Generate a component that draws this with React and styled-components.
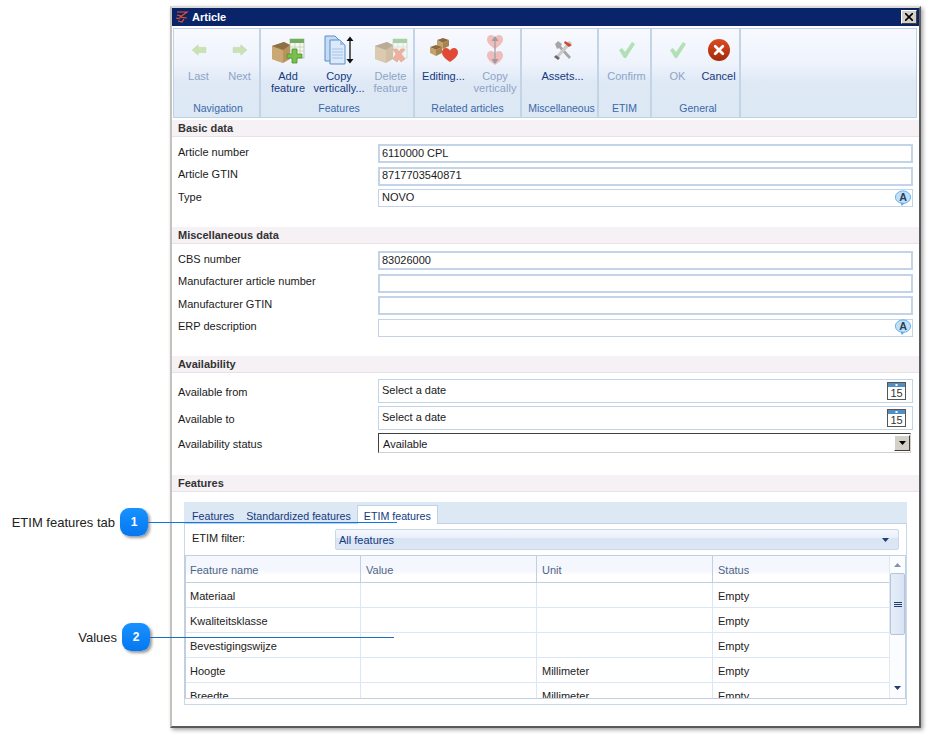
import React from "react";
import styled, { createGlobalStyle } from "styled-components";

const Global = createGlobalStyle`
  html, body { margin: 0; padding: 0; background: #fff; }
  body { font-family: "Liberation Sans", Arial, sans-serif; font-size: 11px; color: #1a1a1a; }
`;

const Page = styled.div`
  position: relative;
  width: 931px;
  height: 738px;
  overflow: hidden;
  padding: 6px 0 0 170px;
  box-sizing: border-box;
  background: #fff;
`;

const Win = styled.div`
  width: 751px;
  height: 722px;
  box-sizing: border-box;
  background: #fff;
  border-style: solid;
  border-width: 2px 2px 2px 2px;
  border-color: #dcdad4 #5a5a5a #5a5a5a #c4c2bc;
  box-shadow: 2px 2px 4px rgba(0, 0, 0, 0.35);
`;

const TitleBar = styled.div`
  height: 18px;
  background: #0a246a;
  display: flex;
  align-items: center;
  padding: 0 2px 0 3px;
  gap: 3px;
  color: #fff;
  font-weight: bold;
  font-size: 11px;
`;

const TitleText = styled.span`
  flex: 1;
`;

const CloseBtn = styled.div`
  width: 16px;
  height: 14px;
  box-sizing: border-box;
  background: #d4d0c8;
  border: 1px solid;
  border-color: #fff #404040 #404040 #fff;
  display: flex;
  align-items: center;
  justify-content: center;
`;

const Ribbon = styled.div`
  margin: 2px 2px 2px 1px;
  height: 90px;
  box-sizing: border-box;
  border: 1px solid #bfd2e6;
  display: flex;
  background: linear-gradient(#f7f9fe 0%, #eef3fc 40%, #dfe9f6 60%, #dde8f5 100%);
`;

const Group = styled.div`
  width: ${(p) => p.$w}px;
  flex: none;
  box-sizing: border-box;
  border-right: 2px solid #c3d4e6;
  display: flex;
  flex-direction: column;
`;

const GroupButtons = styled.div`
  flex: 1;
  display: flex;
  padding-left: ${(p) => p.$pad || 0}px;
`;

const ToolBtn = styled.div`
  width: ${(p) => p.$w}px;
  flex: none;
  display: flex;
  flex-direction: column;
  align-items: center;
  padding-top: 3px;
  color: ${(p) => (p.$off ? "#8ea4c6" : "#15397f")};
  font-size: 11px;
  line-height: 12px;
  text-align: center;
  white-space: nowrap;
`;

const IconWrap = styled.div`
  height: 36px;
  margin-bottom: 2px;
  display: flex;
  align-items: center;
  justify-content: center;
  opacity: ${(p) => (p.$off ? 0.55 : 1)};
`;

const GroupLabel = styled.div`
  height: 19px;
  padding-left: ${(p) => p.$indent || 0}px;
  text-align: center;
  color: #3b68a8;
  font-size: 10.5px;
  line-height: 20px;
  white-space: nowrap;
`;

const Section = styled.div`
  padding-bottom: ${(p) => p.$after}px;
`;

const SectionHead = styled.div`
  height: 17px;
  box-sizing: border-box;
  background: #f6f1f5;
  border-bottom: 1px solid #e8e2e6;
  padding-left: 6px;
  font-weight: bold;
  font-size: 11px;
  line-height: 16px;
  color: #333;
`;

const Rows = styled.div`
  display: flex;
  flex-direction: column;
  gap: ${(p) => p.$gap}px;
  padding: ${(p) => p.$top}px 6px 0 6px;
`;

const Row = styled.div`
  display: grid;
  grid-template-columns: 200px 535px;
  align-items: start;
  height: ${(p) => p.$h}px;
`;

const RowLabel = styled.div`
  position: relative;
  top: ${(p) => p.$shift || 0}px;
`;

const Field = styled.div`
  height: ${(p) => p.$h}px;
  box-sizing: border-box;
  border: ${(p) => (p.$thick ? 2 : 1)}px solid #c4d4e8;
  padding-left: ${(p) => (p.$thick ? 2 : 3)}px;
  padding-bottom: 2px;
  display: flex;
  align-items: center;
  background: #fff;
  font-size: 11px;
`;

const FieldIcon = styled.div`
  display: flex;
  margin-left: auto;
  margin-right: ${(p) => p.$mr || 0}px;
  margin-top: ${(p) => p.$mt || 0}px;
`;

const Select = styled.div`
  height: 20px;
  width: 533px;
  box-sizing: border-box;
  border: 1px solid;
  border-color: #404040 #d4d0c8 #d4d0c8 #404040;
  display: flex;
  align-items: center;
  justify-content: space-between;
  padding-left: 4px;
  font-size: 11px;
`;

const SelectText = styled.span`
  position: relative;
  top: 1px;
`;

const SelectArrow = styled.div`
  width: 16px;
  height: 16px;
  box-sizing: border-box;
  background: #d4d0c8;
  border: 1px solid;
  border-color: #fff #404040 #404040 #fff;
  display: flex;
  align-items: center;
  justify-content: center;
`;

const TabArea = styled.div`
  margin: 10px 0 0 12px;
  width: 723px;
  height: 203px;
  background: #fff;
  display: flex;
  flex-direction: column;
`;

const TabStrip = styled.div`
  height: 22px;
  flex: none;
  box-sizing: border-box;
  background: #dce8f4;
  border-bottom: 1px solid #bfd2e6;
  display: flex;
  align-items: flex-end;
  padding-left: 2px;
`;

const Tab = styled.div`
  height: ${(p) => (p.$on ? 19 : 18)}px;
  padding: 0 6px;
  box-sizing: border-box;
  line-height: ${(p) => (p.$on ? 20 : 22)}px;
  color: #15397f;
  font-size: 10.7px;
  white-space: nowrap;
  background: ${(p) => (p.$on ? "#fff" : "transparent")};
  border: ${(p) => (p.$on ? "1px solid #bfd2e6" : "none")};
  border-bottom: none;
  margin-bottom: ${(p) => (p.$on ? -1 : 0)}px;
`;

const TabBody = styled.div`
  flex: 1;
  box-sizing: border-box;
  border: 1px solid #c9d8e8;
  border-top: none;
  display: flex;
  flex-direction: column;
`;

const FilterRow = styled.div`
  height: 31px;
  flex: none;
  display: grid;
  grid-template-columns: 143px 564px;
  padding: 5px 0 0 7px;
  box-sizing: border-box;
`;

const FilterCombo = styled.div`
  height: 21px;
  box-sizing: border-box;
  border: 1px solid #c9d8e8;
  border-radius: 2px;
  background: linear-gradient(#f4f7fd 0%, #eaf0fa 40%, #d9e4f4 45%, #dde7f5 100%);
  color: #15397f;
  display: flex;
  align-items: center;
  justify-content: space-between;
  padding: 0 9px 0 3px;
  font-size: 11px;
`;

const FilterLabel = styled.div`
  line-height: 18px;
`;

const Grid = styled.div`
  margin: 0 0 5px -1px;
  height: 144px;
  flex: none;
  box-sizing: border-box;
  border: 1px solid #c2cfe0;
  border-left-width: 2px;
  display: flex;
  overflow: hidden;
`;

const GridMain = styled.div`
  width: 703px;
  flex: none;
  overflow: hidden;
`;

const Cols = styled.div`
  display: grid;
  grid-template-columns: 175px 176px 176px 176px;
  height: ${(p) => p.$h}px;
  box-sizing: border-box;
  border-bottom: 1px solid ${(p) => p.$line};
  ${(p) => p.$head && "background: linear-gradient(#f5f7fe 0%, #f5f7fe 55%, #fff 75%, #fff 100%);"}
`;

const Cell = styled.div`
  box-sizing: border-box;
  padding: ${(p) => (p.$head ? 8 : 7)}px 0 0 5px;
  border-right: 1px solid ${(p) => (p.$head ? "#c2cfe0" : "#dbe7f6")};
  color: ${(p) => (p.$head ? "#4e6488" : "#222")};
  font-size: 11px;
  line-height: 13px;
  &:first-child { padding-left: 4px; }
  &:last-child { border-right: none; }
`;

const ScrollBar = styled.div`
  flex: 1;
  border-left: 1px solid #e0e8f2;
  background: #fbfcfe;
  display: flex;
  flex-direction: column;
  align-items: center;
`;

const ScrollArrow = styled.div`
  height: ${(p) => p.$h}px;
  flex: none;
  display: flex;
  align-items: ${(p) => p.$align};
  justify-content: center;
`;

const Thumb = styled.div`
  width: 15px;
  height: 62px;
  flex: none;
  box-sizing: border-box;
  border: 1px solid #b5c5da;
  border-radius: 2px;
  background: linear-gradient(90deg, #e6edf8, #d9e4f3);
  display: flex;
  align-items: center;
  justify-content: center;
`;

const ScrollFill = styled.div`
  flex: 1;
`;

const Callout = styled.div`
  position: absolute;
  left: 0;
  top: ${(p) => p.$top}px;
  height: 28px;
  display: flex;
  align-items: center;
`;

const CalloutText = styled.div`
  width: ${(p) => p.$w}px;
  text-align: right;
  font-size: 13px;
  color: #222;
  padding-right: 5px;
  box-sizing: border-box;
`;

const Badge = styled.div`
  width: 28px;
  height: 28px;
  flex: none;
  border-radius: 9px;
  background: linear-gradient(#1792ff, #0677f0);
  color: #fff;
  font-weight: bold;
  font-size: 12px;
  display: flex;
  align-items: center;
  justify-content: center;
  box-shadow: 2px 2px 3px rgba(0, 0, 0, 0.4);
`;

const Leader = styled.div`
  width: ${(p) => p.$w}px;
  height: 1px;
  background: ${(p) => p.$c};
`;

const Logo = () => (
  <svg width="14" height="14" viewBox="0 0 14 14" fill="none" stroke="#e8502a" strokeWidth="1.2">
    <path d="M2 2h10L5 7l7 1M2 5l4 1M1 8l4 1M3 11l4 1 2-3" />
  </svg>
);

const CloseX = () => (
  <svg width="8" height="8" viewBox="0 0 8 8" stroke="#000" strokeWidth="1.6">
    <path d="M0 0l8 8M8 0L0 8" />
  </svg>
);

const ArrowIcon = ({ dir }) => (
  <svg width="16" height="12" viewBox="0 0 18 14">
    <path
      d={dir === "left" ? "M1 7l7-6v3h9v6H8v3z" : "M17 7l-7-6v3H1v6h9v3z"}
      fill="#a9d27a"
      stroke="#8fbf5e"
      strokeWidth="0.6"
    />
  </svg>
);

const Crate = () => (
  <>
    <path d="M1 10l12-4 6 3v14l-7 4-11-4z" fill="#b8935c" />
    <path d="M1 10l11 4v13L1 23z" fill="#caa873" />
    <path d="M1 10l12-4 6 3-7 5z" fill="#8f6f44" />
  </>
);

const SheetBit = () => (
  <>
    <rect x="19" y="3" width="14" height="19" fill="#f4f8ee" stroke="#9aa98a" strokeWidth="0.6" />
    <rect x="19" y="3" width="14" height="4" fill="#6fae5f" />
    <path d="M19 11h14M19 15h14M24 7v15M29 7v15" stroke="#b9c6ab" strokeWidth="0.6" />
  </>
);

const AddIcon = () => (
  <svg width="34" height="28" viewBox="0 0 34 28">
    <Crate />
    <SheetBit />
    <path d="M21 13h5v5h5v4h-5v5h-5v-5h-5v-4h5z" fill="#79bf4b" stroke="#4d8f2b" strokeWidth="0.8" />
  </svg>
);

const DeleteIcon = () => (
  <svg width="34" height="28" viewBox="0 0 34 28">
    <Crate />
    <SheetBit />
    <path d="M19 13l4 0 2 3 2-3 4 0-4 5 4 5-4 3-2-3-2 3-4-3 3-5z" fill="#ee7a52" stroke="#cf5a34" strokeWidth="0.6" />
  </svg>
);

const CopyIcon = () => (
  <svg width="30" height="30" viewBox="0 0 30 30">
    <path d="M1 1h10l5 5v20H1z" fill="#c5daf3" stroke="#5b8fc9" />
    <path d="M6 5h10l5 5v19H6z" fill="#dbe9f9" stroke="#5b8fc9" />
    <path d="M16 5v5h5z" fill="#9dc0e8" />
    <path d="M8 14h11M8 17h11M8 20h11M8 23h11" stroke="#a6c4e6" />
    <path d="M26 4v22" stroke="#222" strokeWidth="1.4" />
    <path d="M22.5 6L26 1.5 29.5 6zM22.5 24l3.5 4.5 3.5-4.5z" fill="#111" />
  </svg>
);

const Heart = ({ x, y, s = 1, fill }) => (
  <path
    transform={`translate(${x} ${y}) scale(${s})`}
    d="M8 14C2 10 0 7 0 4.200C0 1.800 1.800 0 4 0c1.700 0 3.200 1 4 2.400C8.800 1 10.300 0 12 0c2.200 0 4 1.800 4 4.200C16 7 14 10 8 14z"
    fill={fill}
  />
);

const EditIcon = () => (
  <svg width="32" height="26" viewBox="0 0 32 26">
    <path d="M9 3l6-2 6 2-6 3z" fill="#8a6a3e" />
    <path d="M9 3l6 3v6l-6-3z" fill="#c4a26c" />
    <path d="M21 3l-6 3v6l6-3z" fill="#a8834f" />
    <path d="M2 10l6-2 6 2-6 3z" fill="#8a6a3e" />
    <path d="M2 10l6 3v6l-6-3z" fill="#c4a26c" />
    <path d="M14 10l-6 3v6l6-3z" fill="#a8834f" />
    <Heart x={14} y={11} fill="#e04a35" />
  </svg>
);

const HeartCopyIcon = () => (
  <svg width="20" height="32" viewBox="0 0 20 32">
    <Heart x={2} y={1} fill="#ee8f86" />
    <Heart x={2} y={17} fill="#ee8f86" />
    <path d="M10 5v22" stroke="#555" strokeWidth="1.2" />
    <path d="M6.500 7L10 2l3.500 5zM6.500 25L10 30l3.500-5z" fill="#555" />
  </svg>
);

const ToolsIcon = () => (
  <svg width="20" height="20" viewBox="0 0 20 20">
    <path d="M2 4l3-3 4 3-1 2 10 11-2 2L6 8 4 9z" fill="#8b8b8b" opacity="0.75" />
    <path d="M16 1l3 2-13 14-3 1 1-3z" fill="#c9c9c9" />
    <path d="M12 1l7 4-3 2-5-4z" fill="#cf4a2d" />
    <path d="M3 15l4 3-2 2-4-3z" fill="#6a6a6a" />
  </svg>
);

const CheckIcon = () => (
  <svg width="18" height="18" viewBox="0 0 18 18">
    <path d="M1 9l3-2 3 4 7-10 3 2-9 14H6z" fill="#7ed07a" />
  </svg>
);

const CancelIcon = () => (
  <svg width="24" height="24" viewBox="0 0 24 24">
    <defs>
      <linearGradient id="cancelFill" x1="0" y1="0" x2="0" y2="1">
        <stop offset="0" stopColor="#dd4a22" />
        <stop offset="1" stopColor="#a32a08" />
      </linearGradient>
    </defs>
    <circle cx="12" cy="12" r="11" fill="url(#cancelFill)" />
    <path d="M8.200 8.200l7.600 7.600M15.800 8.200l-7.600 7.600" stroke="#fff" strokeWidth="2.800" strokeLinecap="round" />
  </svg>
);

const SpellIcon = () => (
  <svg width="18" height="17" viewBox="0 0 19 19">
    <ellipse cx="9.500" cy="8" rx="8.500" ry="7" fill="#bfe0fb" stroke="#5aa9e8" />
    <path d="M7 14l1 4 3-3z" fill="#5aa9e8" />
    <text x="9.500" y="12.500" textAnchor="middle" fontSize="12" fontWeight="bold" fontFamily="Liberation Sans" fill="#2b3f55">A</text>
  </svg>
);

const CalendarIcon = () => (
  <svg width="19" height="18" viewBox="0 0 19 18">
    <rect x="0.500" y="0.500" width="18" height="17" fill="#fff" stroke="#555" />
    <rect x="1" y="1" width="17" height="4" fill="#4f8fc4" />
    <rect x="8.500" y="2" width="2" height="2" fill="#fff" />
    <text x="9.500" y="15" textAnchor="middle" fontSize="11" fontFamily="Liberation Sans" fill="#333">15</text>
  </svg>
);

const Tri = ({ up, c = "#000", w = 7 }) => (
  <svg width={w} height="4" viewBox="0 0 7 4">
    <path d={up ? "M0 4l3.500-4L7 4z" : "M0 0h7L3.500 4z"} fill={c} />
  </svg>
);

const toolGroups = [
  { w: 87, pad: 4, indent: 3, label: "Navigation", items: [
    { w: 41, t: ["Last"], off: true, icon: <ArrowIcon dir="left" /> },
    { w: 41, t: ["Next"], off: true, icon: <ArrowIcon dir="right" /> },
  ] },
  { w: 154, pad: 2, indent: 4, label: "Features", items: [
    { w: 50, t: ["Add", "feature"], icon: <AddIcon /> },
    { w: 52, t: ["Copy", "vertically..."], icon: <CopyIcon /> },
    { w: 51, t: ["Delete", "feature"], off: true, icon: <DeleteIcon /> },
  ] },
  { w: 107, pad: 3, label: "Related articles", items: [
    { w: 51, t: ["Editing..."], icon: <EditIcon /> },
    { w: 52, t: ["Copy", "vertically"], off: true, icon: <HeartCopyIcon /> },
  ] },
  { w: 77, pad: 3, indent: 4, label: "Miscellaneous", items: [{ w: 75, t: ["Assets..."], icon: <ToolsIcon /> }] },
  { w: 53, pad: 2, label: "ETIM", items: [{ w: 51, t: ["Confirm"], off: true, icon: <CheckIcon /> }] },
  { w: 89, pad: 5, indent: 5, label: "General", items: [
    { w: 41, t: ["OK"], off: true, icon: <CheckIcon /> },
    { w: 41, t: ["Cancel"], icon: <CancelIcon /> },
  ] },
];

const basicRows = [
  { label: "Article number", value: "6110000 CPL", thick: true },
  { label: "Article GTIN", value: "8717703540871", thick: true },
  { label: "Type", value: "NOVO", spell: true },
];

const miscRows = [
  { label: "CBS number", value: "83026000", thick: true },
  { label: "Manufacturer article number", value: "", thick: true },
  { label: "Manufacturer GTIN", value: "", thick: true },
  { label: "ERP description", value: "", spell: true },
];

const features = [
  ["Materiaal", "", ""],
  ["Kwaliteitsklasse", "", ""],
  ["Bevestigingswijze", "", ""],
  ["Hoogte", "", "Millimeter"],
  ["Breedte", "", "Millimeter"],
];

function FormRow({ row }) {
  return (
    <Row $h={19}>
      <RowLabel $shift={1.5}>{row.label}</RowLabel>
      <Field $h={row.spell ? 18 : 19} $thick={row.thick}>
        {row.value}
        {row.spell && <FieldIcon $mt={2}><SpellIcon /></FieldIcon>}
      </Field>
    </Row>
  );
}

export default function App() {
  return (
    <Page>
      <Global />
      <Win>
        <TitleBar>
          <Logo />
          <TitleText>Article</TitleText>
          <CloseBtn><CloseX /></CloseBtn>
        </TitleBar>
        <Ribbon>
          {toolGroups.map((g) => (
            <Group key={g.label} $w={g.w}>
              <GroupButtons $pad={g.pad}>
                {g.items.map((b) => (
                  <ToolBtn key={b.t.join()} $w={b.w} $off={b.off}>
                    <IconWrap $off={b.off}>{b.icon}</IconWrap>
                    {b.t.map((line) => <div key={line}>{line}</div>)}
                  </ToolBtn>
                ))}
              </GroupButtons>
              <GroupLabel $indent={g.indent}>{g.label}</GroupLabel>
            </Group>
          ))}
        </Ribbon>

        <Section $after={19}>
          <SectionHead>Basic data</SectionHead>
          <Rows $top={7} $gap={3.5}>
            {basicRows.map((r) => <FormRow key={r.label} row={r} />)}
          </Rows>
        </Section>

        <Section $after={18.5}>
          <SectionHead>Miscellaneous data</SectionHead>
          <Rows $top={7} $gap={3.5}>
            {miscRows.map((r) => <FormRow key={r.label} row={r} />)}
          </Rows>
        </Section>

        <Section $after={22}>
          <SectionHead>Availability</SectionHead>
          <Rows $top={6} $gap={3}>
            <Row $h={24}>
              <RowLabel $shift={7}>Available from</RowLabel>
              <Field $h={24}>Select a date<FieldIcon $mr={6} $mt={2}><CalendarIcon /></FieldIcon></Field>
            </Row>
            <Row $h={24}>
              <RowLabel $shift={7}>Available to</RowLabel>
              <Field $h={24}>Select a date<FieldIcon $mr={6} $mt={2}><CalendarIcon /></FieldIcon></Field>
            </Row>
            <Row $h={20}>
              <RowLabel $shift={5}>Availability status</RowLabel>
              <Select>
                <SelectText>Available</SelectText>
                <SelectArrow><Tri /></SelectArrow>
              </Select>
            </Row>
          </Rows>
        </Section>

        <SectionHead>Features</SectionHead>
        <TabArea>
          <TabStrip>
            <Tab>Features</Tab>
            <Tab>Standardized features</Tab>
            <Tab $on>ETIM features</Tab>
          </TabStrip>
          <TabBody>
            <FilterRow>
              <FilterLabel>ETIM filter:</FilterLabel>
              <FilterCombo>
                All features
                <Tri c="#1f3f70" />
              </FilterCombo>
            </FilterRow>
            <Grid>
              <GridMain>
                <Cols $head $h={27} $line="#c2cfe0">
                  {["Feature name", "Value", "Unit", "Status"].map((h) => <Cell key={h} $head>{h}</Cell>)}
                </Cols>
                {features.map((f) => (
                  <Cols key={f[0]} $h={25} $line="#dbe7f6">
                    <Cell>{f[0]}</Cell>
                    <Cell>{f[1]}</Cell>
                    <Cell>{f[2]}</Cell>
                    <Cell>Empty</Cell>
                  </Cols>
                ))}
              </GridMain>
              <ScrollBar>
                <ScrollArrow $h={17} $align="center"><Tri up c="#7f93ad" /></ScrollArrow>
                <Thumb>
                  <svg width="8" height="5" viewBox="0 0 8 5" stroke="#1f3f70"><path d="M0 .5h8M0 2.500h8M0 4.500h8" /></svg>
                </Thumb>
                <ScrollFill />
                <ScrollArrow $h={20} $align="center"><Tri c="#1f3f70" /></ScrollArrow>
              </ScrollBar>
            </Grid>
          </TabBody>
        </TabArea>
      </Win>

      <Callout $top={508}>
        <CalloutText $w={120}>ETIM features tab</CalloutText>
        <Badge>1</Badge>
        <Leader $w={249} $c="#0b78e3" />
      </Callout>
      <Callout $top={623}>
        <CalloutText $w={122}>Values</CalloutText>
        <Badge>2</Badge>
        <Leader $w={244} $c="#1f6fb8" />
      </Callout>
    </Page>
  );
}
